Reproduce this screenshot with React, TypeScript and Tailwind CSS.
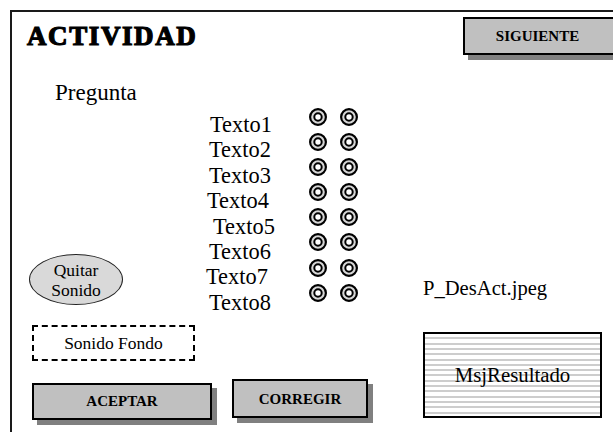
const textos = [
  { label: 'Texto1', ml: 'ml-[4px]' },
  { label: 'Texto2', ml: 'ml-[3px]' },
  { label: 'Texto3', ml: 'ml-[3px]' },
  { label: 'Texto4', ml: 'ml-[1px]' },
  { label: 'Texto5', ml: 'ml-[7px]' },
  { label: 'Texto6', ml: 'ml-[3px]' },
  { label: 'Texto7', ml: 'ml-0' },
  { label: 'Texto8', ml: 'ml-[3px]' },
];

function Radio() {
  return (
    <svg width="18" height="18" viewBox="0 0 18 18">
      <circle cx="9" cy="9" r="7.9" fill="#d6d6d6" stroke="#000" strokeWidth="2.2" />
      <circle cx="9" cy="9" r="3.7" fill="#fff" stroke="#000" strokeWidth="2" />
    </svg>
  );
}

export default function App() {
  return (
    <div className="w-full h-[432px] overflow-hidden bg-white pl-[10px] pt-[10px] [font-family:'Liberation_Serif','Times_New_Roman',serif] text-black">
      <div className="flex w-[660px] h-[440px] border-l-2 border-t-2 border-[#1a1a1a]">
        {/* columna izquierda */}
        <div className="flex flex-col w-[194px] shrink-0">
          <h1 className="mt-[11px] ml-[15px] text-[27px] leading-none font-bold tracking-[1.6px] [-webkit-text-stroke:1.2px_#000]">
            ACTIVIDAD
          </h1>
          <p className="mt-[31px] ml-[43px] text-[23px] leading-none">Pregunta</p>
          <div className="mt-[150px] ml-[17px] w-[94px] h-[51px] rounded-[50%] bg-[#d9d9d9] border-[1.5px] border-[#222] flex flex-col items-center justify-center text-[17.5px] leading-[20px]">
            <span>Quitar</span>
            <span>Sonido</span>
          </div>
          <div className="mt-[20px] ml-[20px] w-[163px] h-[36px] border-2 border-dashed border-black flex items-center justify-center text-[17.5px]">
            Sonido Fondo
          </div>
          <button className="mt-[22px] ml-[20px] w-[180px] h-[37px] shrink-0 bg-[#c0c0c0] border-2 border-black shadow-[5px_5px_0_#808080] text-[15px] font-bold">
            ACEPTAR
          </button>
        </div>

        {/* columna central */}
        <div className="flex flex-col w-[217px] shrink-0">
          <div className="flex items-start">
            <div className="mt-[100px] w-[103px] flex flex-col text-[22.4px] leading-[25.4px]">
              {textos.map((t) => (
                <span key={t.label} className={t.ml}>
                  {t.label}
                </span>
              ))}
            </div>
            <div className="mt-[96px] grid grid-cols-2 gap-x-[13px] gap-y-[7.1px]">
              {textos.map((t) => (
                <div key={t.label} className="contents">
                  <Radio />
                  <Radio />
                </div>
              ))}
            </div>
          </div>
          <button className="mt-[64px] ml-[26px] w-[136px] h-[39px] bg-[#c0c0c0] border-2 border-black shadow-[5px_5px_0_#808080] text-[15px] font-bold">
            CORREGIR
          </button>
        </div>

        {/* columna derecha */}
        <div className="flex flex-col w-[240px] shrink-0">
          <button className="mt-[5px] ml-[40px] w-[160px] h-[38px] bg-[#c0c0c0] border-2 border-black shadow-[5px_5px_0_#808080] text-[15px] font-bold pr-[11px]">
            SIGUIENTE
          </button>
          <p className="mt-[221px] text-[20.6px] leading-[24px]">P_DesAct.jpeg</p>
          <div className="mt-[32px] w-[179px] h-[86px] border-2 border-black bg-[repeating-linear-gradient(to_bottom,#ffffff_0px,#ffffff_3.3px,#cdcdcd_3.3px,#cdcdcd_5.3px)] flex items-center justify-center text-[20.8px]">
            MsjResultado
          </div>
        </div>
      </div>
    </div>
  );
}
